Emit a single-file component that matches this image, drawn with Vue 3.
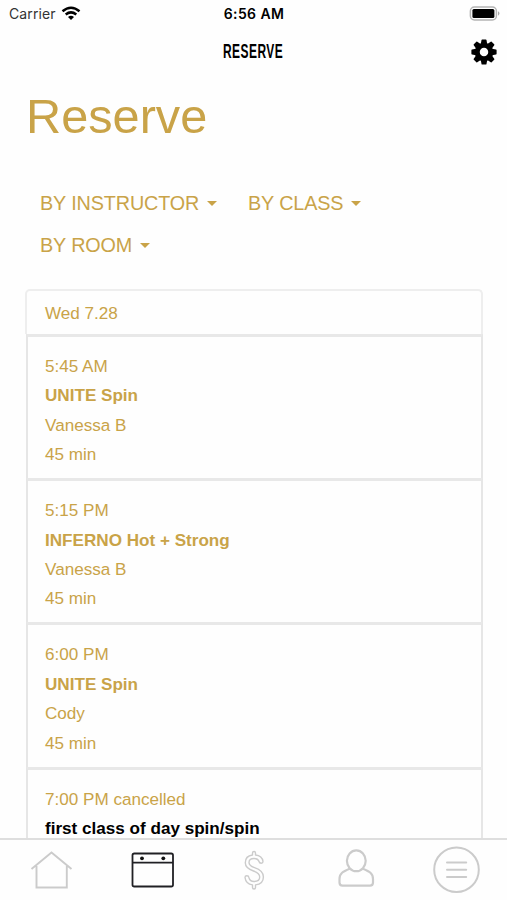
<script setup>
const filters = [['BY INSTRUCTOR', 'instructor'], ['BY CLASS', 'class'], ['BY ROOM', 'room']]
const classes = [
  { time: '5:45 AM', name: 'UNITE Spin', teacher: 'Vanessa B', length: '45 min' },
  { time: '5:15 PM', name: 'INFERNO Hot + Strong', teacher: 'Vanessa B', length: '45 min' },
  { time: '6:00 PM', name: 'UNITE Spin', teacher: 'Cody', length: '45 min' },
  { time: '7:00 PM cancelled', name: 'first class of day spin/spin', cancelled: true }
]
</script>

<template>
  <div class="screen">
    <header class="status">
      <div class="carrier">
        <span class="carrier-name">Carrier</span>
        <svg width="20" height="16" viewBox="0 0 20 16" fill="none" stroke="#000" stroke-width="2.5">
          <path d="M1.5 5.2Q10 -1.8 18.5 5.2M4.7 8.4Q10 4.3 15.3 8.4" />
          <path d="M7 11Q10 8.7 13 11L10 14Z" fill="#000" stroke="none" />
        </svg>
      </div>
      <span class="clock">6:56 AM</span>
      <svg class="battery" width="32" height="16" viewBox="0 0 32 16">
        <rect x="1.4" y="1" width="26" height="13" rx="4" fill="#fff" stroke="#b4b4b4" stroke-width="1.5" />
        <rect x="3.4" y="3" width="22" height="9" rx="1.5" />
        <path d="M29 5.3Q32 7.5 29 9.7Z" fill="#aaa" />
      </svg>
    </header>
    <nav class="topbar">
      <span class="bar-title">RESERVE</span>
      <svg class="gear" width="26" height="26" viewBox="-13 -13 26 26">
        <g v-for="n in 8" :key="n" :transform="`rotate(${n * 45})`">
          <path d="M-3.2-8L-2.5-12Q-2.4-12.6-1.8-12.6H1.8Q2.4-12.6 2.5-12L3.2-8Z" />
        </g>
        <circle r="6.75" fill="none" stroke="#000" stroke-width="5" />
      </svg>
    </nav>
    <main class="content">
      <h1>Reserve</h1>
      <div class="filters">
        <div v-for="f in filters" :key="f[1]" class="filter" :class="f[1]">
          <span>{{ f[0] }}</span><i class="caret"></i>
        </div>
      </div>
      <section class="schedule">
        <div class="day">Wed 7.28</div>
        <article v-for="(c, i) in classes" :key="i" class="class-card">
          <div>{{ c.time }}</div>
          <div class="name" :class="{ black: c.cancelled }">{{ c.name }}</div>
          <div v-if="c.teacher">{{ c.teacher }}</div>
          <div v-if="c.length">{{ c.length }}</div>
        </article>
      </section>
    </main>
    <footer class="tabs">
      <svg width="101" height="60" viewBox="0 0 101 60" fill="none" stroke="#cbcbcb" stroke-width="1.9">
        <path d="M31.5 29L51.5 12.5L71.5 29M36.5 26V47.5H66.8V26" />
      </svg>
      <svg width="101" height="60" viewBox="101 0 101 60" fill="none" stroke="#202024" stroke-width="1.8">
        <rect x="132.5" y="13.5" width="40.5" height="33" rx="1.8" />
        <path d="M132.5 22.7H173" />
        <circle cx="142" cy="18.3" r="1.9" fill="#111" stroke="none" />
        <circle cx="163.3" cy="18.3" r="1.9" fill="#111" stroke="none" />
      </svg>
      <svg width="103" height="60" viewBox="202 0 103 60" fill="none" stroke="#cbcbcb" stroke-width="1.4" stroke-linejoin="round">
        <path d="M252.5 15V13Q252.5 11.5 254 11.5T255.5 13V15C260 15.5 262.5 18 263 21.5Q263 23.2 261.2 23.2T259 21.5C258.3 19.4 257 18.5 254 18.5C250.5 18.5 249 20 249 22.5C249 25.3 251 26.5 254.5 27.7C260.5 29.7 263.4 32 263.4 37C263.4 41.6 260 44.4 255.5 44.9V47.5Q255.5 49 254 49T252.5 47.5V44.9C248 44.3 245.5 41.6 245 37.5Q245 35.8 246.8 35.8T249 37.7C249.7 40.3 251 41.5 254 41.5C257.6 41.5 259.7 39.8 259.7 37C259.7 33.8 257.7 32.5 253.5 31C248 29.2 245.3 27 245.3 22.8C245.3 18.2 248.3 15.5 252.5 15Z" />
      </svg>
      <svg width="101" height="60" viewBox="305 0 101 60" fill="none" stroke="#cbcbcb" stroke-width="2.2">
        <ellipse cx="356.3" cy="20.8" rx="9.4" ry="10.4" />
        <path d="M349.7 28.7C343 31.5 339.5 33.2 339.5 39V42.5Q339.5 45.6 342.5 45.6H370Q373 45.6 373 42.5V39C373 33.2 369.5 31.5 362.9 28.7" />
      </svg>
      <svg width="101" height="60" viewBox="406 0 101 60" fill="none" stroke="#cbcbcb" stroke-width="2">
        <circle cx="456.5" cy="29.8" r="22.3" />
        <path d="M447 22.6H466.2M447 29.8H466.2M447 37H466.2" stroke-linecap="round" />
      </svg>
    </footer>
  </div>
</template>

<style>
body { margin: 0; overflow: hidden; background: #fff; }
</style>
<style scoped>
.screen { width: 507px; height: 900px; display: flex; flex-direction: column; overflow: hidden; background: #fefefe; color: #c9a348; font-family: "Liberation Sans", Arial, sans-serif; }
.status, .topbar { flex: none; display: grid; grid-template-columns: 1fr auto 1fr; align-items: center; color: #000; }
.status { height: 27px; font-family: Inter, sans-serif; padding: 0 6px 0 9px; }
.carrier { display: flex; gap: 5px; align-items: center; }
.carrier-name { font-size: 14px; letter-spacing: .1px; color: #333; }
.clock { font-size: 14px; font-weight: 600; letter-spacing: .4px; margin-right: 2px; }
.battery, .gear { justify-self: end; }
.topbar { height: 49px; padding: 0 10px 0 9px; }
.bar-title { grid-column: 2; width: 60px; font: 700 21px/46px "Liberation Sans", sans-serif; padding-bottom: 2px; transform: scaleX(.57); transform-origin: 0 50%; white-space: nowrap; letter-spacing: .8px; }
.content { flex: 1; min-height: 0; overflow: hidden; padding: 10px 24px 0 25px; }
h1 { margin: 0; padding-left: 1px; font-size: 48.7px; line-height: 60px; font-weight: 400; }
.filters { display: grid; grid-template-columns: 208px 1fr; grid-auto-rows: 41.5px; padding: 37px 0 23px 15px; }
.filter { display: flex; align-items: center; gap: 8px; font-size: 19.8px; letter-spacing: -.12px; }
.caret { width: 0; height: 0; border-left: 5px solid transparent; border-right: 5px solid transparent; border-top: 5px solid #c9a348; }
.schedule { font-size: 17.1px; line-height: 29.4px; }
.day { box-sizing: border-box; height: 45px; padding: 7.5px 18px; border: 2px solid #eee; border-bottom: 0; border-radius: 5px 5px 0 0; }
.class-card { box-sizing: border-box; height: 144.2px; margin-left: 1px; padding: 15px 17px 0; border: 2px solid #e6e6e6; border-top: 3px solid #e8e8e8; border-bottom: 0; }
.name { font-weight: 700; }
.black { color: #000; }
.tabs { flex: none; height: 62px; box-sizing: border-box; border-top: 2px solid #dedede; display: flex; }
.tabs svg { flex: none; }
</style>
